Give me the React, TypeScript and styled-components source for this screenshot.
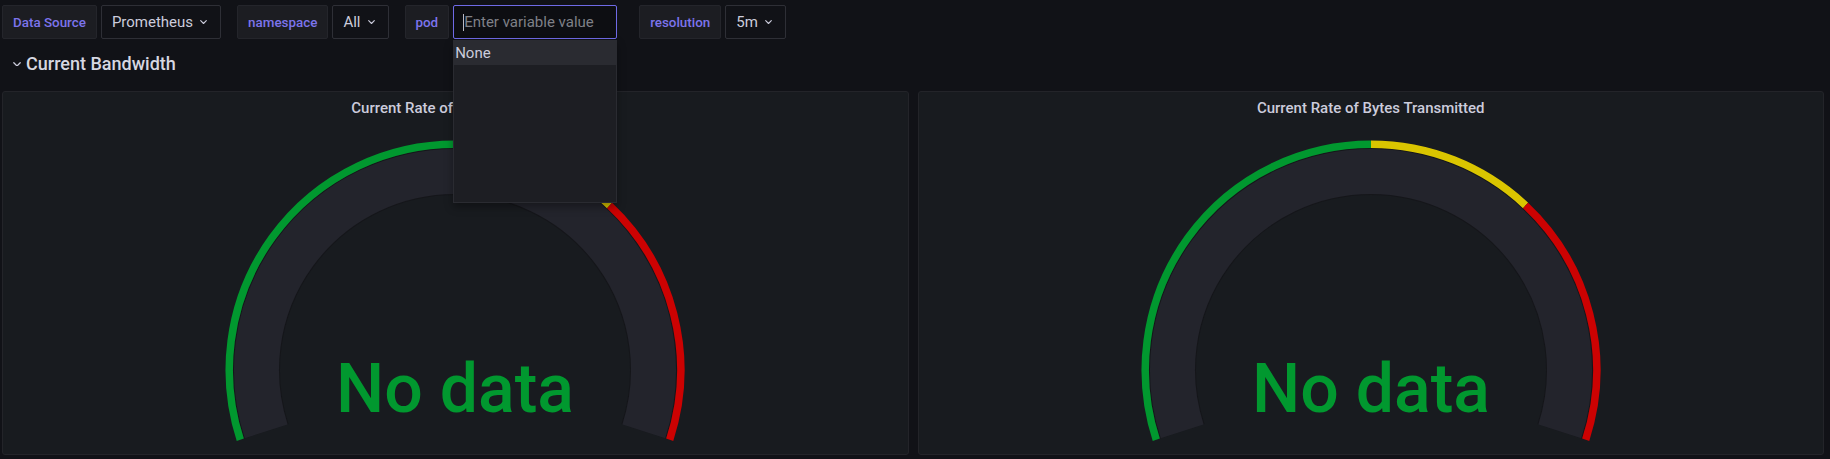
import React from "react";
import styled, { createGlobalStyle } from "styled-components";

const GlobalStyle = createGlobalStyle`
  html, body {
    margin: 0;
    padding: 0;
    background: #111217;
    font-family: Roboto, "Noto Sans", "Liberation Sans", sans-serif;
    color: #ccccdc;
    overflow: hidden;
  }
  * { box-sizing: border-box; }
`;

const Page = styled.div`
  display: flex;
  flex-direction: column;
  width: 1830px;
  height: 459px;
`;

const SubMenu = styled.div`
  display: flex;
  align-items: center;
  padding: 5px 0 0 2px;
`;

const VarGroup = styled.div<{ $space?: number }>`
  display: flex;
  align-items: stretch;
  gap: 4px;
  margin-right: ${(p) => p.$space ?? 16}px;
  height: 34px;
`;

const VarLabel = styled.label`
  display: flex;
  align-items: center;
  padding: 0 10px;
  background: #1c1d22;
  border: 1px solid #24252b;
  border-radius: 2px;
  color: #7c74ec;
  font-size: 13.4px;
  font-weight: 500;
  white-space: nowrap;
`;

const VarSelect = styled.div`
  display: flex;
  align-items: center;
  gap: 7px;
  padding: 0 13px 0 10px;
  background: #111217;
  border: 1px solid #2e2f36;
  border-radius: 2px;
  color: #ccccdc;
  font-size: 15px;
  white-space: nowrap;
`;

const InputWrap = styled.div`
  position: relative;
  width: 164px;
  display: flex;
`;

const VarInput = styled.input`
  width: 100%;
  height: 100%;
  background: #0d0e12;
  border: 1px solid #6f6ae6;
  border-radius: 2px;
  color: #ccccdc;
  font-family: Roboto, "Liberation Sans", sans-serif;
  font-size: 15px;
  padding: 0 10px;
  outline: none;
  &::placeholder {
    color: #7f8087;
  }
`;

const Caret = styled.span`
  position: absolute;
  left: 10px;
  top: 9px;
  width: 1px;
  height: 17px;
  background: #b9bac4;
  pointer-events: none;
`;

const Menu = styled.div`
  position: absolute;
  top: calc(100% + 1px);
  left: 0;
  width: 164px;
  height: 163px;
  background: #1d1e23;
  border: 1px solid #2a2b31;
  border-top: none;
  z-index: 10;
  box-shadow: 0 4px 8px rgba(0, 0, 0, 0.35);
`;

const MenuItem = styled.div<{ $active?: boolean }>`
  height: 25px;
  display: flex;
  align-items: center;
  padding: 0 1px;
  font-size: 15px;
  color: #ccccdc;
  background: ${(p) => (p.$active ? "#2a2b31" : "transparent")};
`;

const RowHeader = styled.div`
  display: flex;
  align-items: center;
  gap: 5px;
  margin-top: 14px;
  padding-left: 13px;
  height: 22px;
  color: #d6d7e1;
  font-size: 18px;
  font-weight: 500;
  line-height: 22px;
`;

const PanelGrid = styled.div`
  display: grid;
  grid-template-columns: 1fr 1fr;
  gap: 9px;
  padding: 0 6px 0 2px;
  margin-top: 16px;
  height: 364px;
`;

const Panel = styled.section`
  display: flex;
  flex-direction: column;
  background: #181b1f;
  border: 1px solid #232429;
  border-radius: 3px;
  overflow: hidden;
`;

const PanelHeader = styled.header`
  height: 32px;
  line-height: 32px;
  text-align: center;
  font-size: 15px;
  font-weight: 500;
  color: #ccccdc;
  white-space: nowrap;
`;

const PanelBody = styled.div`
  flex: 1;
  display: flex;
  justify-content: center;
  align-items: flex-start;
  padding-top: 6px;
`;

const Chevron = ({ size = 7 }: { size?: number }) => (
  <svg width={size} height={size * 0.6} viewBox="0 0 10 6" fill="none">
    <path d="M1 1 L5 5 L9 1" stroke="#ccccdc" strokeWidth="1.6" strokeLinecap="round" strokeLinejoin="round" />
  </svg>
);

const CX = 235;
const CY = 240;
const START = 198;
const SPAN = 216;

const pt = (r: number, a: number) => {
  const rad = (a * Math.PI) / 180;
  return [CX + r * Math.cos(rad), CY - r * Math.sin(rad)];
};

const arc = (r: number, f0: number, f1: number) => {
  const a0 = START - SPAN * f0;
  const a1 = START - SPAN * f1;
  const [x0, y0] = pt(r, a0);
  const [x1, y1] = pt(r, a1);
  const large = a0 - a1 > 180 ? 1 : 0;
  return `M ${x0.toFixed(2)} ${y0.toFixed(2)} A ${r} ${r} 0 ${large} 1 ${x1.toFixed(2)} ${y1.toFixed(2)}`;
};

const GaugeText = styled.text`
  font-family: Roboto, "Liberation Sans", sans-serif;
  font-weight: 500;
  font-size: 68px;
  fill: #01982f;
`;

const Gauge = () => (
  <svg width="470" height="316" viewBox="0 0 470 316">
    <path d={arc(198.5, 0, 1)} stroke="#15161a" strokeWidth="47" fill="none" />
    <path d={arc(198.5, 0, 1)} stroke="#23242c" strokeWidth="45" fill="none" />
    <path d={arc(225.75, 0, 0.5)} stroke="#01982f" strokeWidth="7.5" fill="none" />
    <path d={arc(225.75, 0.5, 0.7)} stroke="#dac500" strokeWidth="7.5" fill="none" />
    <path d={arc(225.75, 0.7, 1)} stroke="#cc0202" strokeWidth="7.5" fill="none" />
    <GaugeText x={CX} y={CY + 41.5} textAnchor="middle">
      No data
    </GaugeText>
  </svg>
);

const panels = ["Current Rate of Bytes Received", "Current Rate of Bytes Transmitted"];

export default function App() {
  return (
    <Page>
      <GlobalStyle />
      <SubMenu>
        <VarGroup>
          <VarLabel>Data Source</VarLabel>
          <VarSelect>
            Prometheus <Chevron />
          </VarSelect>
        </VarGroup>
        <VarGroup>
          <VarLabel>namespace</VarLabel>
          <VarSelect>
            All <Chevron />
          </VarSelect>
        </VarGroup>
        <VarGroup $space={22}>
          <VarLabel>pod</VarLabel>
          <InputWrap>
            <VarInput placeholder="Enter variable value" />
            <Caret />
            <Menu>
              <MenuItem $active>None</MenuItem>
            </Menu>
          </InputWrap>
        </VarGroup>
        <VarGroup>
          <VarLabel>resolution</VarLabel>
          <VarSelect>
            5m <Chevron />
          </VarSelect>
        </VarGroup>
      </SubMenu>
      <RowHeader>
        <Chevron size={8} />
        Current Bandwidth
      </RowHeader>
      <PanelGrid>
        {panels.map((t) => (
          <Panel key={t}>
            <PanelHeader>{t}</PanelHeader>
            <PanelBody>
              <Gauge />
            </PanelBody>
          </Panel>
        ))}
      </PanelGrid>
    </Page>
  );
}
